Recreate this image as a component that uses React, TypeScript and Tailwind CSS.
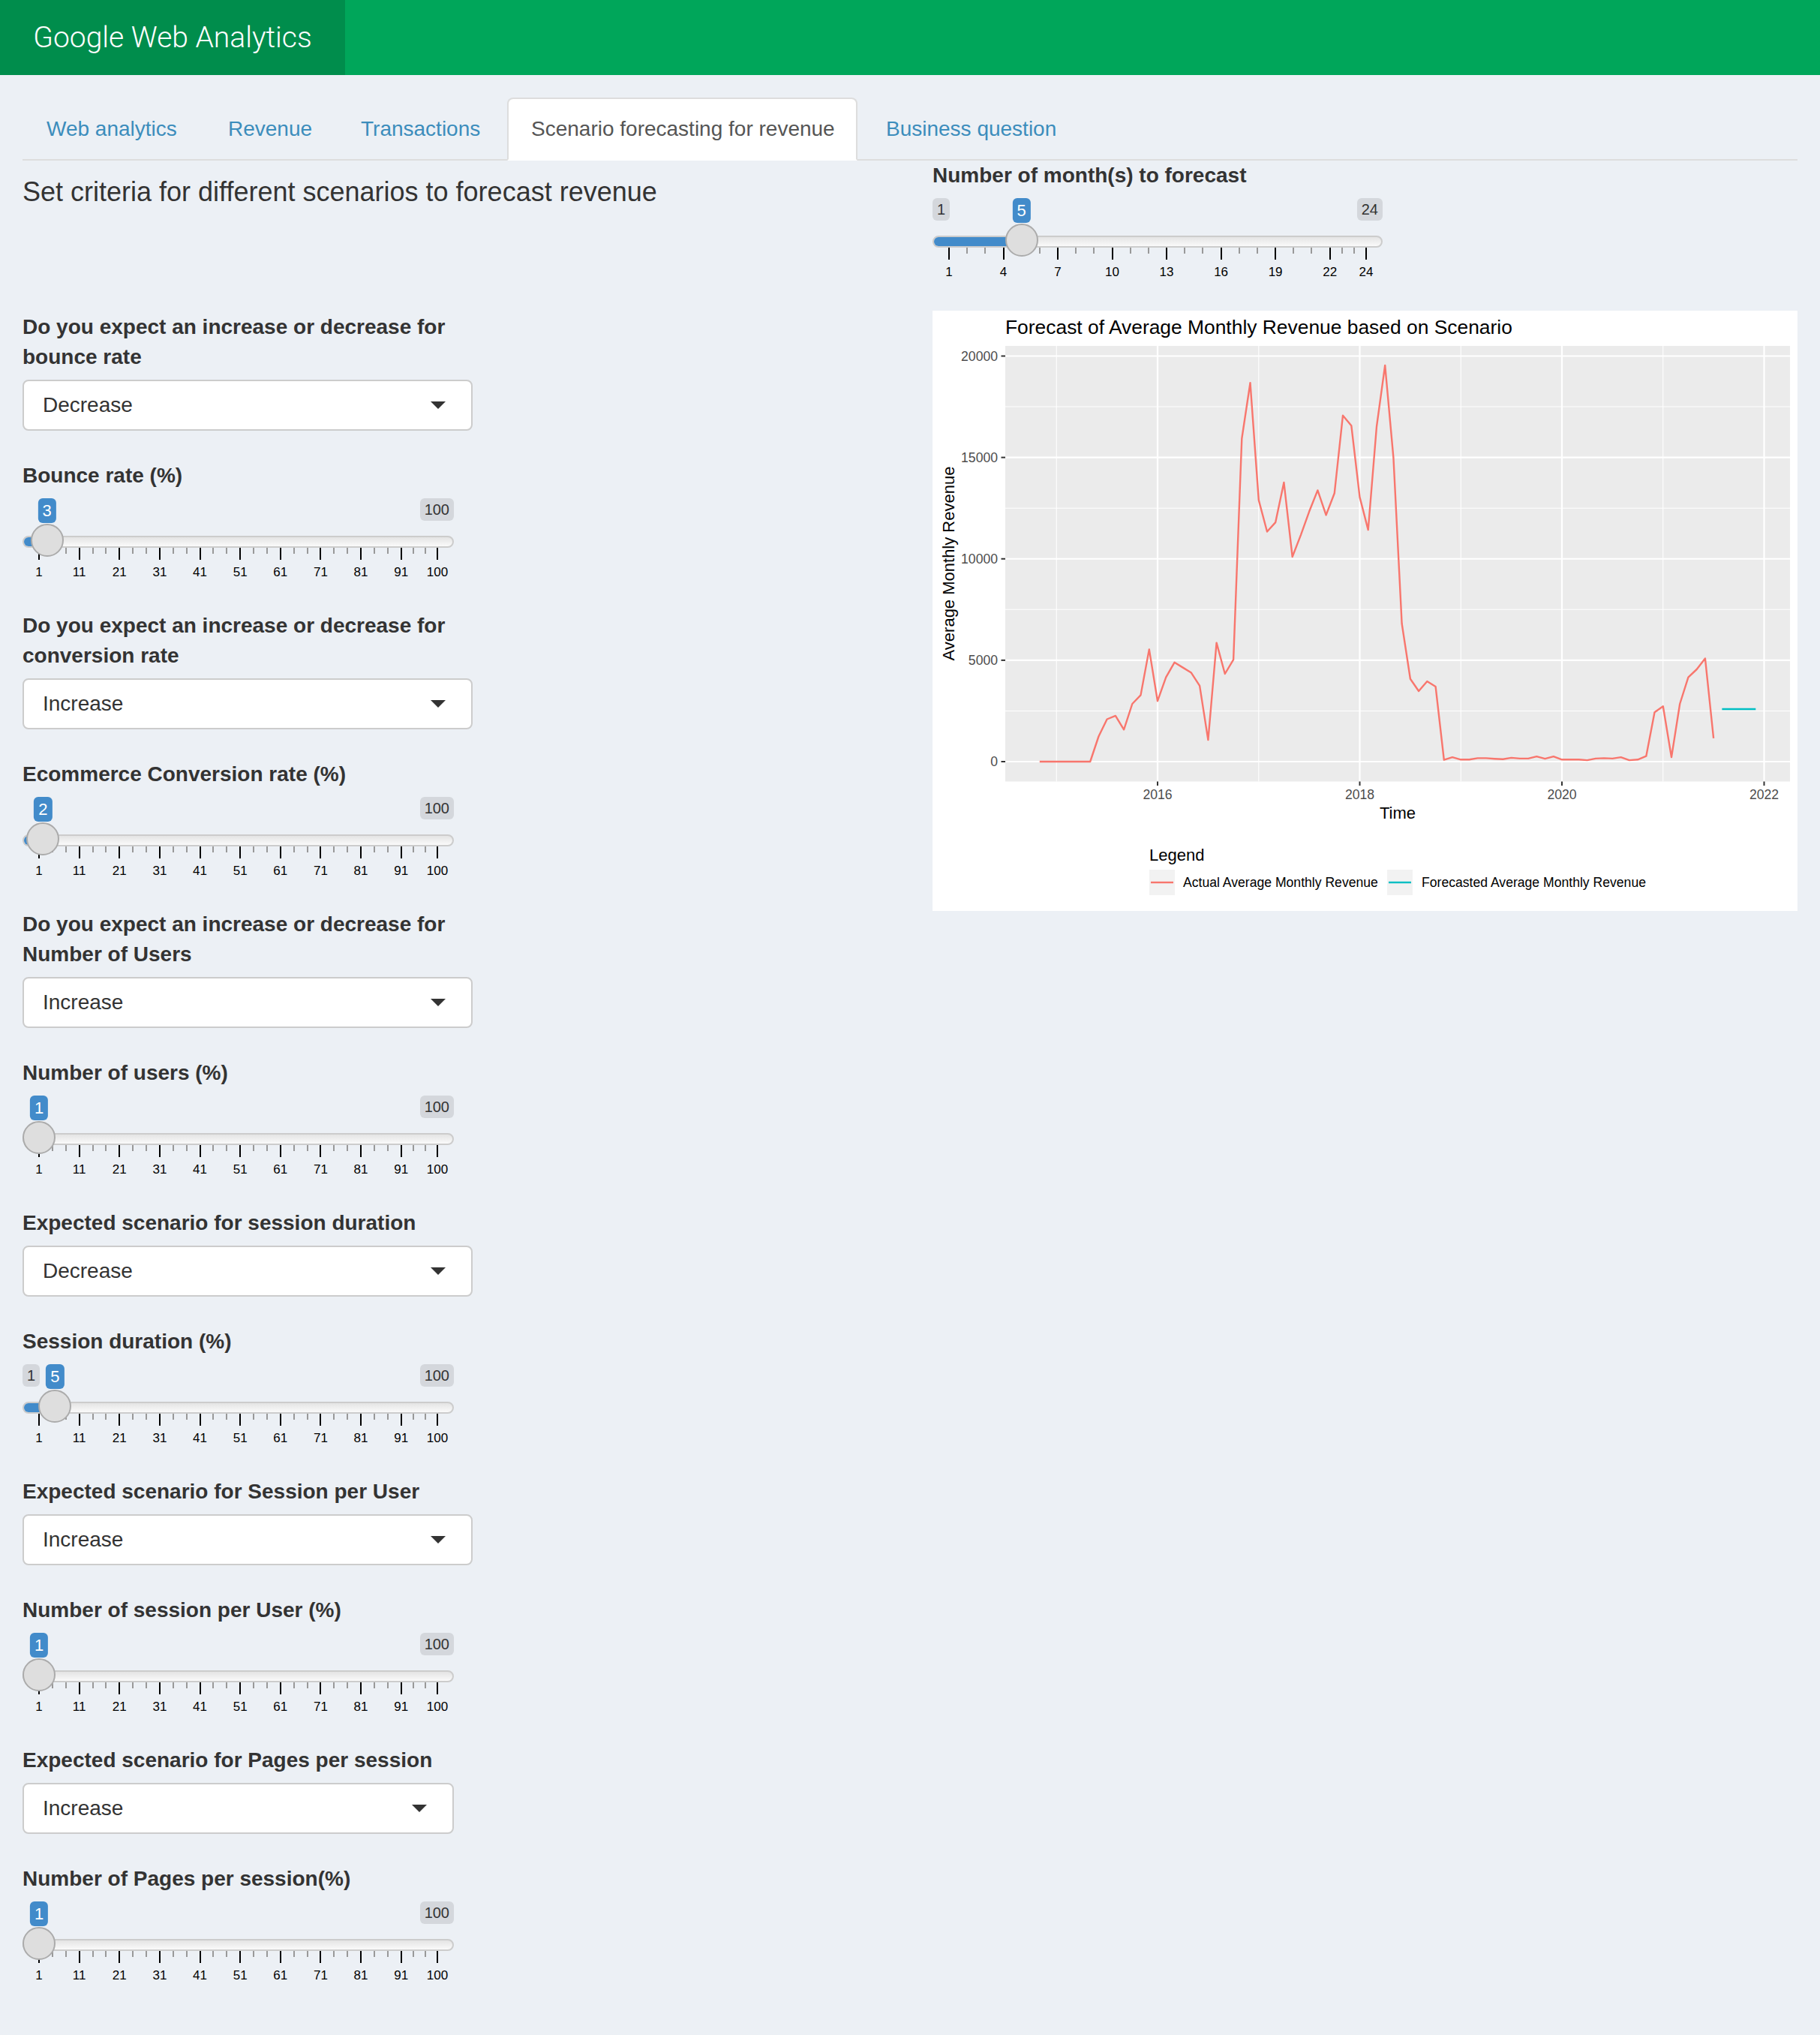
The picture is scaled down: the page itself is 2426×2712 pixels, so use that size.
import React from "react"

// monthly average revenue, Nov 2014 .. Jul 2021
const revenue = [
  0, 0, 0, 0, 0, 0, 0, 1240, 2090, 2260, 1580, 2850, 3280, 5535, 2990, 4160, 4890, 4640, 4380, 3740, 1070,
  5860, 4330, 5030, 15930, 18680, 12900, 11340, 11800, 13770, 10100, 11170, 12330, 13380, 12160, 13240,
  17070, 16570, 13040, 11430, 16520, 19540, 14990, 6810, 4080, 3480, 3960, 3700, 85, 220, 100, 100, 170,
  170, 140, 120, 190, 150, 150, 255, 140, 255, 100, 100, 100, 70, 150, 170, 150, 220, 70, 100, 270, 2430,
  2730, 220, 2850, 4160, 4550, 5090, 1150,
]
const forecast = [2590, 2590, 2590, 2590, 2590]

const tabs = [
  { name: "Web analytics", cls: "w-[238px]" },
  { name: "Revenue", cls: "w-[173px]" },
  { name: "Transactions", cls: "w-[223px]" },
  { name: "Scenario forecasting for revenue", cls: "w-[467px] mr-[2px]", active: true },
  { name: "Business question", cls: "w-[290px]" },
]

function SelectInput({ label, value, narrow }: { label: string; value: string; narrow?: boolean }) {
  return (
    <div className="flex flex-col gap-[10px]">
      <label className="w-[600px] text-[28px] font-bold leading-[40px] text-[#333]">{label}</label>
      <div
        className={`flex h-[68px] items-center justify-between rounded-[8px] border-2 border-[#ccc] bg-white pl-[25px] pr-[34px] text-[28px] text-[#333] ${
          narrow ? "w-[575px]" : "w-[600px]"
        }`}
      >
        {value}
        <span className="h-0 w-0 border-x-[10px] border-t-[10px] border-x-transparent border-t-[#333]" />
      </div>
    </div>
  )
}

type SliderProps = {
  label: string
  min: number
  max: number
  value: number
  marks: number[]
  showMin?: boolean
  wide?: boolean
}

function Slider({ label, min, max, value, marks, showMin, wide }: SliderProps) {
  const width = wide ? 600 : 575
  const pos = (v: number) => 22 + ((v - min) / (max - min)) * (width - 44)
  const center = pos(value)
  const small: number[] = []
  for (let i = 1; i < marks.length; i++) {
    const a = pos(marks[i - 1])
    const b = pos(marks[i])
    small.push(a + (b - a) / 3, a + ((b - a) * 2) / 3)
  }

  return (
    <div className="flex flex-col gap-[10px]">
      <label className="text-[28px] font-bold leading-[40px] text-[#333]">{label}</label>
      <div className={`relative h-[120px] ${wide ? "w-[600px]" : "w-[575px]"}`}>
        {/* min / max labels */}
        <div className="flex h-[30px] items-start justify-between">
          <span
            className={`rounded-[6px] bg-black/10 px-[6px] py-[2px] text-[20px] leading-[26px] text-[#333] ${
              showMin ? "" : "invisible"
            }`}
          >
            {min}
          </span>
          <span className="rounded-[6px] bg-black/10 px-[6px] py-[2px] text-[20px] leading-[26px] text-[#333]">
            {max}
          </span>
        </div>

        {/* track */}
        <div className="mt-[20px] h-[16px] overflow-hidden rounded-[16px] border-2 border-[#ccc] bg-linear-to-b from-[#e4e4e4] to-[#fafafa]">
          <div className="-ml-[2px] -mt-[2px] h-[16px] rounded-l-[16px] bg-[#428bca]" style={{ width: center }} />
        </div>

        {/* grid */}
        {small.map((p, i) => (
          <span key={"s" + i} className="absolute top-[66px] h-[8px] w-[2px] bg-[#999]" style={{ left: p - 1 }} />
        ))}
        {marks.map((m) => (
          <span key={"b" + m} className="absolute top-[66px] h-[16px] w-[2px] bg-black" style={{ left: pos(m) - 1 }} />
        ))}
        {marks.map((m) => (
          <span
            key={"t" + m}
            className="absolute top-[87px] -ml-[30px] w-[60px] text-center text-[17px] leading-[24px] text-black"
            style={{ left: pos(m) }}
          >
            {m}
          </span>
        ))}

        {/* handle + value */}
        <div
          className="absolute top-[34px] h-[44px] w-[44px] rounded-full border-2 border-[#ababab] bg-[#dedede]"
          style={{ left: center - 22 }}
        />
        <span
          className="absolute top-0 -translate-x-1/2 rounded-[6px] bg-[#428bca] px-[6px] py-[2px] text-[22px] leading-[29px] text-white"
          style={{ left: center }}
        >
          {value}
        </span>
      </div>
    </div>
  )
}

const pct = [1, 11, 21, 31, 41, 51, 61, 71, 81, 91, 100]
const months = [1, 4, 7, 10, 13, 16, 19, 22, 24]

function ForecastPlot() {
  const X = (t: number) => 300 + (t - 2016) * 134.75
  const Y = (v: number) => 601 - v * 0.027025
  const start = 2014 + 10 / 12
  const actual = revenue.map((v, i) => `${X(start + i / 12).toFixed(1)},${Y(v).toFixed(1)}`).join(" ")
  const fc = forecast.map((v, i) => `${X(start + (81 + i) / 12).toFixed(1)},${Y(v).toFixed(1)}`).join(" ")
  const left = 97
  const right = 1143
  const top = 47
  const bottom = 627.5

  return (
    <div className="h-[800px] w-[1153px] bg-white">
      <svg width="1153" height="800" viewBox="0 0 1153 800">
        <text x={left} y={31} fontSize="26.4" fill="#000">
          Forecast of Average Monthly Revenue based on Scenario
        </text>

        <rect x={left} y={top} width={right - left} height={bottom - top} fill="#EBEBEB" />
        {[2500, 7500, 12500, 17500].map((v) => (
          <line key={v} x1={left} x2={right} y1={Y(v)} y2={Y(v)} stroke="#fff" strokeWidth="1.1" />
        ))}
        {[2015, 2017, 2019, 2021].map((t) => (
          <line key={t} x1={X(t)} x2={X(t)} y1={top} y2={bottom} stroke="#fff" strokeWidth="1.1" />
        ))}
        {[0, 5000, 10000, 15000, 20000].map((v) => (
          <line key={v} x1={left} x2={right} y1={Y(v)} y2={Y(v)} stroke="#fff" strokeWidth="2.2" />
        ))}
        {[2016, 2018, 2020, 2022].map((t) => (
          <line key={t} x1={X(t)} x2={X(t)} y1={top} y2={bottom} stroke="#fff" strokeWidth="2.2" />
        ))}

        <polyline points={actual} fill="none" stroke="#F8766D" strokeWidth="2.4" strokeLinejoin="round" />
        <polyline points={fc} fill="none" stroke="#00BFC4" strokeWidth="2.4" />

        {[0, 5000, 10000, 15000, 20000].map((v) => (
          <g key={v}>
            <line x1={left - 5.5} x2={left} y1={Y(v)} y2={Y(v)} stroke="#333" strokeWidth="2" />
            <text x={left - 10} y={Y(v)} textAnchor="end" dominantBaseline="central" fontSize="17.6" fill="#4D4D4D">
              {v}
            </text>
          </g>
        ))}
        {[2016, 2018, 2020, 2022].map((t) => (
          <g key={t}>
            <line x1={X(t)} x2={X(t)} y1={bottom} y2={bottom + 5.5} stroke="#333" strokeWidth="2" />
            <text x={X(t)} y={645} textAnchor="middle" dominantBaseline="central" fontSize="17.6" fill="#4D4D4D">
              {t}
            </text>
          </g>
        ))}

        <text x={620} y={669} textAnchor="middle" dominantBaseline="central" fontSize="22" fill="#000">
          Time
        </text>
        <text
          x={21}
          y={337}
          transform="rotate(-90 21 337)"
          textAnchor="middle"
          dominantBaseline="central"
          fontSize="22"
          fill="#000"
        >
          Average Monthly Revenue
        </text>

        <text x={289} y={725} dominantBaseline="central" fontSize="22" fill="#000">
          Legend
        </text>
        <rect x={289} y={745} width={34} height={34} fill="#F2F2F2" />
        <line x1={291} x2={321} y1={762} y2={762} stroke="#F8766D" strokeWidth="2.4" />
        <text x={334} y={762} dominantBaseline="central" fontSize="17.6" fill="#000">
          Actual Average Monthly Revenue
        </text>
        <rect x={606} y={745} width={34} height={34} fill="#F2F2F2" />
        <line x1={608} x2={638} y1={762} y2={762} stroke="#00BFC4" strokeWidth="2.4" />
        <text x={652} y={762} dominantBaseline="central" fontSize="17.6" fill="#000">
          Forecasted Average Monthly Revenue
        </text>
      </svg>
    </div>
  )
}

export default function App() {
  return (
    <div className="min-h-[2712px] w-[2426px] bg-[#ecf0f5] font-['Liberation_Sans',Arial,sans-serif] text-[#333]">
      {/* Header */}
      <header className="flex h-[100px] bg-[#00a65a]">
        <div className="flex w-[460px] items-center justify-center bg-[#008d4c] font-['Roboto',sans-serif] text-[39px] font-light text-white">
          Google Web Analytics
        </div>
      </header>

      {/* Tabs */}
      <ul className="mx-[30px] mt-[30px] flex gap-[4px] border-b-2 border-[#ddd]">
        {tabs.map((tab) => (
          <li key={tab.name} className={`-mb-[2px] shrink-0 ${tab.cls}`}>
            <span
              className={
                tab.active
                  ? "block whitespace-nowrap rounded-t-[8px] border-2 border-[#ddd] border-b-transparent bg-white px-[30px] py-[20px] text-[28px] leading-[40px] text-[#555]"
                  : "block whitespace-nowrap rounded-t-[8px] border-2 border-transparent px-[30px] py-[20px] text-[28px] leading-[40px] text-[#3c8dbc]"
              }
            >
              {tab.name}
            </span>
          </li>
        ))}
      </ul>

      {/* Tab content */}
      <div className="grid grid-cols-2 gap-x-[60px] px-[30px]">
        <div className="flex flex-col">
          <h4 className="mb-[140px] mt-[22px] text-[36px] font-normal leading-[40px] text-[#333]">
            Set criteria for different scenarios to forecast revenue
          </h4>
          <div className="flex flex-col gap-[40px]">
            <SelectInput label="Do you expect an increase or decrease for bounce rate" value="Decrease" />
            <Slider label="Bounce rate (%)" min={1} max={100} value={3} marks={pct} />
          </div>
          <div className="mt-[30px] flex flex-col gap-[40px]">
            <SelectInput label="Do you expect an increase or decrease for conversion rate" value="Increase" />
            <Slider label="Ecommerce Conversion rate (%)" min={1} max={100} value={2} marks={pct} />
          </div>
          <div className="mt-[30px] flex flex-col gap-[40px]">
            <SelectInput label="Do you expect an increase or decrease for Number of Users" value="Increase" />
            <Slider label="Number of users (%)" min={1} max={100} value={1} marks={pct} />
          </div>
          <div className="mt-[30px] flex flex-col gap-[40px]">
            <SelectInput label="Expected scenario for session duration" value="Decrease" />
            <Slider label="Session duration (%)" min={1} max={100} value={5} marks={pct} showMin />
          </div>
          <div className="mt-[30px] flex flex-col gap-[40px]">
            <SelectInput label="Expected scenario for Session per User" value="Increase" />
            <Slider label="Number of session per User (%)" min={1} max={100} value={1} marks={pct} />
          </div>
          <div className="mt-[30px] flex flex-col gap-[40px]">
            <SelectInput label="Expected scenario for Pages per session" value="Increase" narrow />
            <Slider label="Number of Pages per session(%)" min={1} max={100} value={1} marks={pct} />
          </div>
        </div>

        <div className="flex flex-col gap-[30px]">
          <Slider label="Number of month(s) to forecast" min={1} max={24} value={5} marks={months} showMin wide />
          <ForecastPlot />
        </div>
      </div>
    </div>
  )
}
